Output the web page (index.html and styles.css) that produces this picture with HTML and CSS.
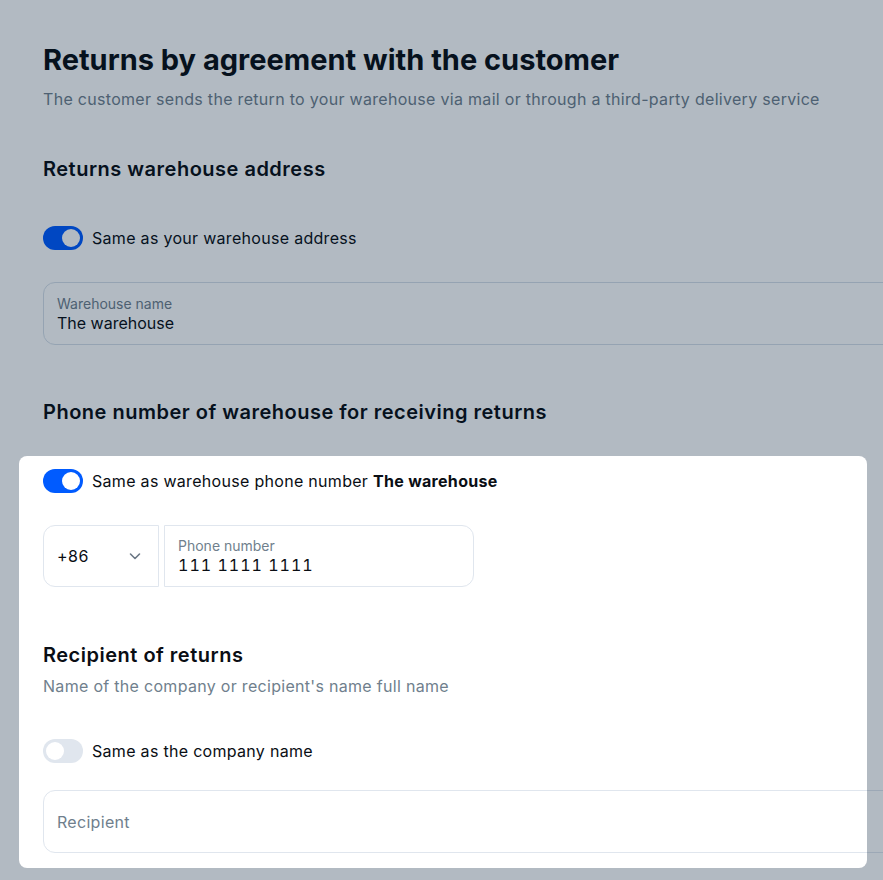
FILE: index.html
```html
<!DOCTYPE html>
<html lang="en-US">
<head>
    <meta charset="utf-8">
    <title>Returns by agreement with the customer</title>
    <link rel="stylesheet" href="styles.css">
</head>
<body>
<div class="page">
    <h1 class="title">Returns by agreement with the customer</h1>
    <p class="subtitle">The customer sends the return to your warehouse via mail or through a third-party delivery service</p>

    <h2 class="section-title first">Returns warehouse address</h2>
    <label class="switch-row">
        <span class="switch on"><span class="knob"></span></span>
        <span>Same as your warehouse address</span>
    </label>
    <div class="field">
        <span class="field-label">Warehouse name</span>
        <span class="field-value">The warehouse</span>
    </div>

    <h2 class="section-title phone-title">Phone number of warehouse for receiving returns</h2>

    <!-- highlighted block -->
    <div class="focus">
        <label class="switch-row top-row">
            <span class="switch on"><span class="knob"></span></span>
            <span>Same as warehouse phone number <b>The warehouse</b></span>
        </label>
        <div class="phone">
            <div class="code">
                <span>+86</span>
                <svg width="16" height="16" viewBox="0 0 16 16"><path d="M3.5 6l4.5 4.5L12.5 6" fill="none" stroke="#6b7785" stroke-width="1.6" stroke-linecap="round" stroke-linejoin="round"/></svg>
            </div>
            <div class="number">
                <span class="field-label">Phone number</span>
                <span class="field-value digits">111 1111 1111</span>
            </div>
        </div>

        <h2 class="section-title recipient-title">Recipient of returns</h2>
        <p class="hint">Name of the company or recipient's name full name</p>
        <label class="switch-row off-row">
            <span class="switch"><span class="knob"></span></span>
            <span>Same as the company name</span>
        </label>
        <div class="field empty">
            <span class="placeholder">Recipient</span>
        </div>
    </div>
</div>
</body>
</html>
```

FILE: styles.css
```css
html, body {
    margin: 0;
    overflow: hidden;
    background: #fff;
}

body {
    min-height: 100vh;
    font-family: Inter, "Noto Sans", sans-serif;
    color: #0a0e14;
}

.page {
    width: 1000px;
    padding: 40px 0 0 43px;
}

.title {
    margin: 0;
    font-size: 29px;
    line-height: 40px;
    font-weight: 700;
}

.subtitle, .hint {
    font-size: 16px;
    line-height: 22px;
    letter-spacing: 0.3px;
    color: #707f8d;
}

.subtitle {
    margin: 8px 0 0;
}

.hint {
    margin: 6px 0 0;
}

.section-title {
    margin: 0;
    font-size: 20px;
    line-height: 28px;
    font-weight: 600;
    letter-spacing: 0.5px;
}

.first {
    margin-top: 45px;
}

.phone-title {
    margin-top: 53px;
}

.switch-row {
    display: flex;
    align-items: center;
    gap: 9px;
    font-size: 16px;
    line-height: 22px;
    letter-spacing: 0.3px;
    margin-top: 43px;
}

.switch {
    width: 40px;
    height: 24px;
    border-radius: 12px;
    background: #e0e6ee;
    position: relative;
    flex: none;
}

.switch .knob {
    position: absolute;
    top: 3px;
    left: 3px;
    width: 18px;
    height: 18px;
    border-radius: 50%;
    background: #fff;
}

.switch.on {
    background: #005bff;
}

.switch.on .knob {
    left: 19px;
}

.field {
    margin-top: 32px;
    height: 63px;
    box-sizing: border-box;
    border: 1px solid #d6dfe9;
    border-radius: 12px;
    padding: 12px 13px;
    display: flex;
    flex-direction: column;
    justify-content: center;
}

.field-label {
    font-size: 14px;
    line-height: 18px;
    color: #707f8d;
}

.field-value {
    font-size: 16px;
    line-height: 20px;
}

.digits {
    font-variant-numeric: tabular-nums;
    letter-spacing: 1px;
}

.focus {
    position: relative;
    margin: 30px 0 0 -24px;
    padding: 13px 24px 15px;
    width: 800px;
}

.focus::after {
    content: "";
    position: absolute;
    top: 0;
    left: 0;
    width: 848px;
    height: 100%;
    border-radius: 8px;
    box-shadow: 0 0 0 3000px rgba(0, 26, 52, 0.3);
    pointer-events: none;
}

.top-row {
    margin-top: 0;
}

.phone {
    display: flex;
    gap: 5px;
    margin-top: 32px;
}

.code, .number {
    height: 62px;
    box-sizing: border-box;
    border: 1px solid #e0e6ee;
}

.code {
    width: 116px;
    border-radius: 12px 0 0 12px;
    display: flex;
    align-items: center;
    justify-content: space-between;
    padding: 0 15px 0 13px;
    font-size: 16px;
    letter-spacing: 0.5px;
}

.number {
    width: 310px;
    border-radius: 0 12px 12px 0;
    padding: 0 13px;
    display: flex;
    flex-direction: column;
    justify-content: center;
}

.recipient-title {
    margin-top: 54px;
}

.off-row {
    margin-top: 42px;
}

.field.empty {
    margin-top: 27px;
    width: 1000px;
    border-color: #e0e6ee;
}

.placeholder {
    font-size: 16px;
    letter-spacing: 0.3px;
    color: #707f8d;
}
```
